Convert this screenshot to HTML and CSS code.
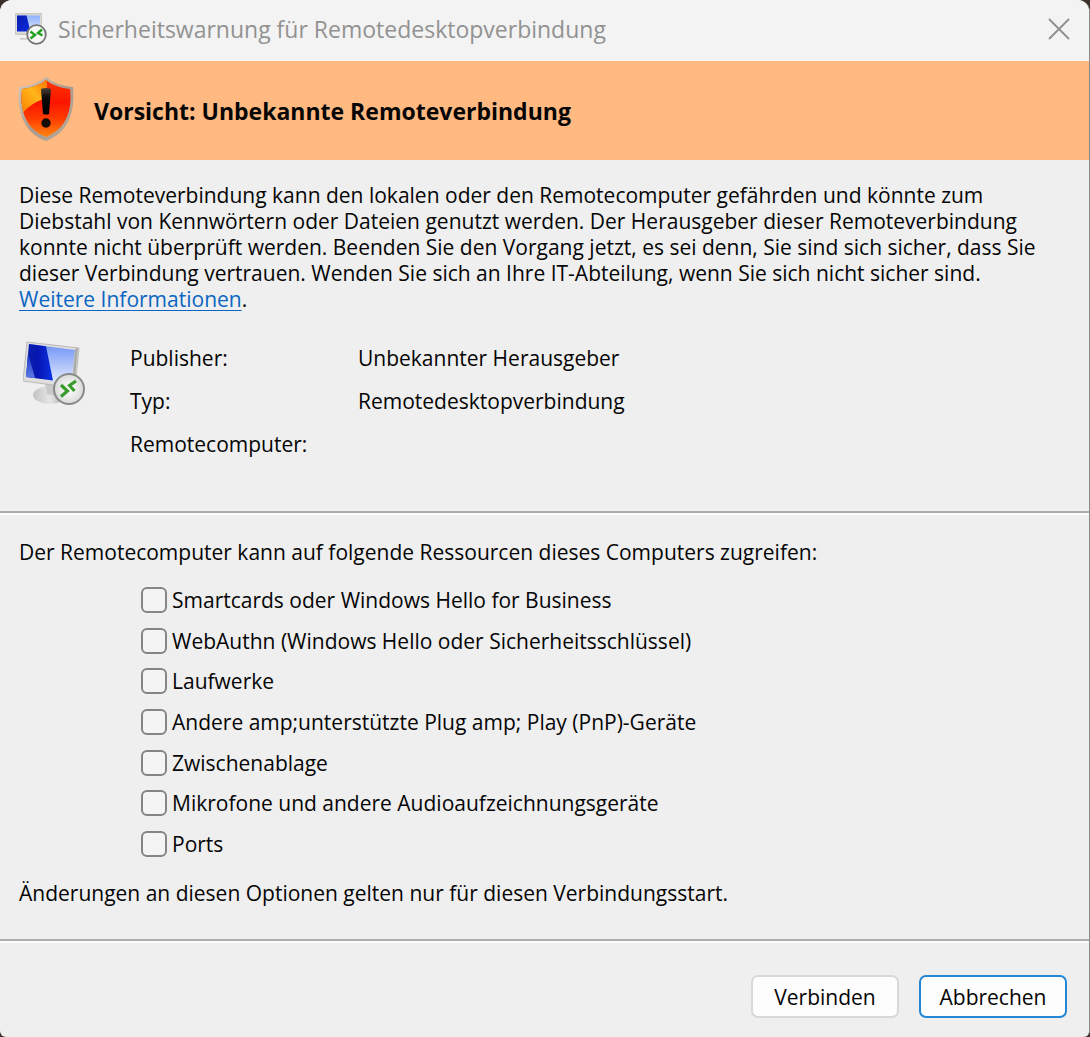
FILE: index.html
```html
<!DOCTYPE html>
<html lang="de">
<head>
<meta charset="utf-8">
<meta name="viewport" content="width=device-width, initial-scale=1">
<title>Sicherheitswarnung für Remotedesktopverbindung</title>
<link rel="stylesheet" href="styles.css">
</head>
<body>
<main class="dialog">
  <header class="titlebar">
    <svg class="titlebar-icon" viewBox="0 0 32 32" aria-hidden="true">
      <defs>
        <linearGradient id="small-light" x1="0" y1="0" x2="0" y2="1"><stop offset="0" stop-color="#8fb2fb"/><stop offset="1" stop-color="#dde8ff"/></linearGradient>
        <linearGradient id="small-dark" x1="0" y1="0" x2="1" y2="1"><stop offset="0" stop-color="#0a1cae"/><stop offset="1" stop-color="#0a2be0"/></linearGradient>
      </defs>
      <path d="M9 22h6v3H5v1.500h10V22z" fill="#c4c4c4"/>
      <rect x="0" y="0" width="27" height="22" fill="#c9cac4"/>
      <rect x="1" y="1.500" width="25" height="19" fill="#dcdcd8"/>
      <rect x="2" y="2.500" width="23" height="16" fill="url(#small-light)"/>
      <path d="M2 2.500h9.500l4 16H2z" fill="url(#small-dark)"/>
      <circle cx="21.500" cy="21.500" r="9.300" fill="#f6f8f6" stroke="#747474" stroke-width="1.800"/>
      <path d="M15.500 18.500l4.500 3.500-4.500 3.500M27 16.500L23 20l4.500 2.500" fill="none" stroke="#1fa01f" stroke-width="2.400"/>
    </svg>
    <h1 class="titlebar-text">Sicherheitswarnung für Remotedesktopverbindung</h1>
    <button class="close" type="button" aria-label="Schließen">
      <svg viewBox="0 0 22 22" aria-hidden="true"><path d="M1 1l20 20M21 1L1 21" stroke="#8d8f8f" stroke-width="1.800"/></svg>
    </button>
  </header>

  <section class="banner">
    <svg class="shield" viewBox="0 0 56 66" aria-hidden="true">
      <defs>
        <linearGradient id="shield-base" x1="0" y1="0" x2="0" y2="1"><stop offset="0" stop-color="#ff3a00"/><stop offset=".4" stop-color="#fb1500"/><stop offset=".65" stop-color="#ff3d00"/><stop offset="1" stop-color="#ff9a16"/></linearGradient>
        <linearGradient id="shield-shine" x1="0" y1="1" x2="1" y2="0"><stop offset="0" stop-color="#f97a00"/><stop offset=".55" stop-color="#ffb619"/><stop offset="1" stop-color="#ff6a00"/></linearGradient>
        <linearGradient id="shield-rim" x1="0" y1="0" x2="1" y2="1"><stop offset="0" stop-color="#d9cdbf"/><stop offset=".5" stop-color="#a99b90"/><stop offset="1" stop-color="#b8aa9c"/></linearGradient>
        <linearGradient id="mark" x1="0" y1="0" x2="0" y2="1"><stop offset="0" stop-color="#4b4038"/><stop offset=".35" stop-color="#0c0a0a"/><stop offset="1" stop-color="#000"/></linearGradient>
        <clipPath id="shield-clip"><path d="M28 4C22 9 13 12 4 13 2 30 5 52 28 61 51 52 54 30 52 13 43 12 34 9 28 4z"/></clipPath>
      </defs>
      <path d="M28 1C21 7 12 10 1 11-1 31 3 56 28 65 53 56 57 31 55 11 44 10 35 7 28 1z" fill="url(#shield-rim)"/>
      <g clip-path="url(#shield-clip)">
        <rect width="56" height="66" fill="url(#shield-base)"/>
        <path d="M0 0h29v22C18 25 9 31 4 38L0 36z" fill="url(#shield-shine)"/>
      </g>
      <path d="M23 13q5-2 10 0l-2 25q-3 1-6 0z" fill="url(#mark)"/>
      <circle cx="28" cy="47" r="4.700" fill="#160c08"/>
    </svg>
    <h2 class="banner-text">Vorsicht: Unbekannte Remoteverbindung</h2>
  </section>

  <section class="intro">
    <p class="warning">Diese Remoteverbindung kann den lokalen oder den Remotecomputer gefährden und könnte zum<br>
      Diebstahl von Kennwörtern oder Dateien genutzt werden. Der Herausgeber dieser Remoteverbindung<br>
      konnte nicht überprüft werden. Beenden Sie den Vorgang jetzt, es sei denn, Sie sind sich sicher, dass Sie<br>
      dieser Verbindung vertrauen. Wenden Sie sich an Ihre IT-Abteilung, wenn Sie sich nicht sicher sind.<br>
      <a href="#info">Weitere Informationen</a>.</p>

    <div class="details">
      <svg class="computer" viewBox="0 0 64 64" aria-hidden="true">
        <defs>
          <linearGradient id="screen-light" x1="0" y1="0" x2="0" y2="1"><stop offset="0" stop-color="#6f92f6"/><stop offset="1" stop-color="#e6eeff"/></linearGradient>
          <linearGradient id="screen-dark" x1="0" y1="0" x2="1" y2="0"><stop offset="0" stop-color="#0a1fa8"/><stop offset=".45" stop-color="#0616b4"/><stop offset="1" stop-color="#0b33e4"/></linearGradient>
          <linearGradient id="screen-glint" x1="0" y1="0" x2="0" y2="1"><stop offset="0" stop-color="#1a34c4"/><stop offset="1" stop-color="#5d7be4"/></linearGradient>
          <linearGradient id="stand" x1="0" y1="0" x2="1" y2="0"><stop offset="0" stop-color="#c2c2c2"/><stop offset=".5" stop-color="#e6e6e6"/><stop offset="1" stop-color="#a4a4a4"/></linearGradient>
          <radialGradient id="badge"><stop offset="0" stop-color="#fff"/><stop offset="1" stop-color="#d8dad8"/></radialGradient>
        </defs>
        <ellipse cx="27" cy="54" rx="17" ry="9" fill="url(#stand)"/>
        <path d="M22 42l14 3-2 10-10-2z" fill="#c9c9c9"/>
        <path d="M4 1L56 7 52 47 0 40z" fill="#dededd" stroke="#bababa"/>
        <path d="M6 3L52 9 48 42 3 36z" fill="url(#screen-light)"/>
        <path d="M6 3L23 5.200 30 39.600 3 36z" fill="url(#screen-dark)"/>
        <path d="M5 12L12 37 3 36z" fill="url(#screen-glint)"/>
        <path d="M52 8l3-1-4 39-2-4z" fill="#a9aba9"/>
        <circle cx="46" cy="48" r="15" fill="url(#badge)" stroke="#8a8a8a" stroke-width="2"/>
        <path d="M38 44l6.500 6-6.500 5.500M53 40l-6.500 4.500 5 5.500" fill="none" stroke="#389b2c" stroke-width="3.200"/>
      </svg>
      <dl class="facts">
        <dt>Publisher:</dt><dd>Unbekannter Herausgeber</dd>
        <dt>Typ:</dt><dd>Remotedesktopverbindung</dd>
        <dt>Remotecomputer:</dt><dd></dd>
      </dl>
    </div>
  </section>

  <fieldset class="resources">
    <legend class="resources-title">Der Remotecomputer kann auf folgende Ressourcen dieses Computers zugreifen:</legend>
    <div class="options">
      <label class="option"><input type="checkbox">Smartcards oder Windows Hello for Business</label>
      <label class="option"><input type="checkbox">WebAuthn (Windows Hello oder Sicherheitsschlüssel)</label>
      <label class="option"><input type="checkbox">Laufwerke</label>
      <label class="option"><input type="checkbox">Andere amp;unterstützte Plug amp; Play (PnP)-Geräte</label>
      <label class="option"><input type="checkbox">Zwischenablage</label>
      <label class="option"><input type="checkbox">Mikrofone und andere Audioaufzeichnungsgeräte</label>
      <label class="option"><input type="checkbox">Ports</label>
    </div>
    <p class="note">Änderungen an diesen Optionen gelten nur für diesen Verbindungsstart.</p>
  </fieldset>

  <footer class="actions">
    <button class="button" type="button">Verbinden</button>
    <button class="button button-default" type="button">Abbrechen</button>
  </footer>
</main>
</body>
</html>
```
FILE: styles.css
```css
* {
  box-sizing: border-box;
}

html {
  background: #3b2f2b;
}

body {
  margin: 0;
  font: 21px/26px "Open Sans", "Noto Sans", sans-serif;
  color: #050505;
}

h1, h2, p, dl, dd {
  margin: 0;
}

.dialog {
  display: flex;
  flex-direction: column;
  min-height: 100vh;
  overflow: hidden;
  background: #efefef;
  border-right: 1px solid #8b8b8b;
  border-radius: 12px 12px 6px 6px;
}

.titlebar {
  display: flex;
  align-items: center;
  gap: 11px;
  height: 61px;
  padding: 0 19px 4px 15px;
  background: #f3f3f3;
}

.titlebar-icon {
  width: 32px;
  height: 32px;
}

.titlebar-text {
  flex: 1;
  font-size: 23px;
  font-weight: 400;
  line-height: 30px;
  color: #929292;
}

.close {
  display: flex;
  padding: 0;
  border: 0;
  background: none;
}

.close svg {
  width: 22px;
  height: 22px;
}

.banner {
  display: flex;
  align-items: center;
  gap: 20px;
  height: 99px;
  padding: 0 18px;
  background: #ffb981;
}

.shield {
  width: 56px;
  height: 66px;
  margin-bottom: 3px;
}

.banner-text {
  font-size: 23px;
  font-weight: 700;
  line-height: 30px;
}

.intro {
  padding: 22px 19px 54px;
}

.warning {
  white-space: nowrap;
}

.warning a {
  color: #0a66c2;
  text-decoration-thickness: 1px;
  text-underline-offset: 3px;
}

.details {
  display: flex;
  gap: 43px;
  padding: 29px 4px 0;
}

.computer {
  width: 64px;
  height: 64px;
}

.facts {
  display: grid;
  grid-template-columns: 228px 1fr;
  row-gap: 17px;
  padding-top: 4px;
}

.resources {
  min-width: 0;
  margin: 0;
  padding: 0 19px 33px;
  border: 0;
  border-top: 2px solid #adadad;
  box-shadow: inset 0 2px #fbfbfb;
}

.resources-title {
  float: left;
  width: 100%;
  padding: 26px 0 15px;
}

.options {
  display: grid;
  grid-auto-rows: 1fr;
  clear: both;
  min-height: 284px;
  margin-left: 122px;
}

.option {
  display: flex;
  align-items: center;
  justify-self: start;
  gap: 5px;
}

.option input {
  appearance: none;
  width: 26px;
  height: 26px;
  margin: 0;
  border: 2px solid #858585;
  border-radius: 6px;
  background: #f4f4f4;
}

.option input:checked {
  background: #0067c0;
}

.note {
  padding-top: 16px;
}

.actions {
  display: flex;
  flex: 1;
  align-items: flex-start;
  justify-content: flex-end;
  gap: 20px;
  padding: 34px 22px 19px;
  border-top: 2px solid #adadad;
  box-shadow: inset 0 2px #fbfbfb;
}

.button {
  width: 148px;
  height: 43px;
  padding: 0;
  border: 2px solid #d8d8d8;
  border-radius: 7px;
  background: #fdfdfd;
  color: inherit;
  font: inherit;
}

.button-default {
  border-color: #2387d6;
}
```
